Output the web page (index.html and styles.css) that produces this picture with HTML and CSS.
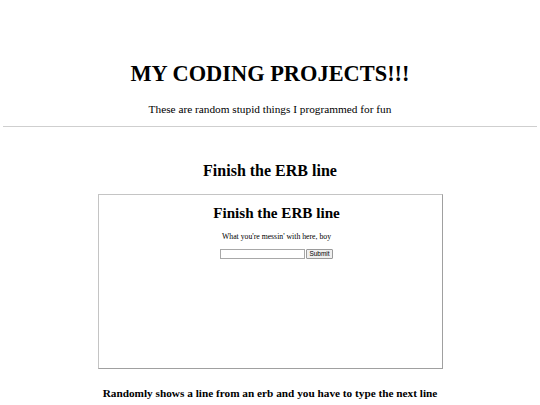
FILE: index.html
```html
<!DOCTYPE html>
<html>
<head>
<meta charset="utf-8">
<title>My Coding Projects</title>
<link rel="stylesheet" href="styles.css">
</head>
<body>
<header class="site-header">
  <h1 class="site-title">MY CODING PROJECTS!!!</h1>
  <p class="site-sub">These are random stupid things I programmed for fun</p>
</header>
<hr class="divider">
<section class="project">
  <h2 class="project-title">Finish the ERB line</h2>
  <div class="frame">
    <h2 class="frame-title">Finish the ERB line</h2>
    <p class="frame-line">What you're messin' with here, boy</p>
    <form class="frame-form">
      <input class="frame-input" type="text">
      <button class="frame-btn" type="button">Submit</button>
    </form>
  </div>
  <p class="project-desc">Randomly shows a line from an erb and you have to type the next line</p>
</section>
</body>
</html>
```
FILE: styles.css
```css
html, body {
  margin: 0;
  padding: 0;
  background: #fff;
}
body {
  font-family: "Liberation Serif", "Times New Roman", serif;
  color: #000;
}
.site-header {
  display: flex;
  flex-direction: column;
  align-items: center;
  padding-top: 64px;
}
.site-title {
  margin: 0;
  font-size: 22.4px;
  line-height: 20px;
  font-weight: bold;
}
.site-sub {
  margin: 19px 0 0;
  font-size: 11.3px;
  line-height: 12px;
}
.divider {
  margin: 11px 3px 0;
  border: none;
  border-top: 1px solid #cfcfcf;
  height: 0;
}
.project {
  display: flex;
  flex-direction: column;
  align-items: center;
}
.project-title {
  margin: 35px 0 0;
  font-size: 16px;
  line-height: 18px;
  font-weight: bold;
}
.frame {
  margin-top: 14px;
  width: 345px;
  height: 175px;
  box-sizing: border-box;
  border: 1px solid #a0a0a0;
  border-top-color: #c4c4c4;
  border-left-color: #c4c4c4;
  display: flex;
  flex-direction: column;
  align-items: center;
  padding: 10px 0 0 13px;
}
.frame-title {
  margin: 0;
  font-size: 15.15px;
  line-height: 16px;
  font-weight: bold;
}
.frame-line {
  margin: 11px 0 0;
  font-size: 7.75px;
  line-height: 9px;
}
.frame-form {
  margin: 8px 0 0;
  display: flex;
  align-items: center;
  gap: 1px;
}
.frame-input {
  width: 85px;
  height: 10px;
  box-sizing: border-box;
  border: 1px solid #a8a8a8;
  padding: 0;
  margin: 0;
  background: #fff;
}
.frame-btn {
  height: 10px;
  box-sizing: border-box;
  border: 1px solid #9a9a9a;
  border-radius: 1px;
  background: #efefef;
  padding: 0 2px;
  margin: 0;
  font-family: "Liberation Sans", Arial, sans-serif;
  font-size: 6.5px;
  line-height: 8px;
  color: #000;
}
.project-desc {
  margin: 18px 0 0;
  font-size: 11.27px;
  line-height: 12px;
  font-weight: bold;
}
```
